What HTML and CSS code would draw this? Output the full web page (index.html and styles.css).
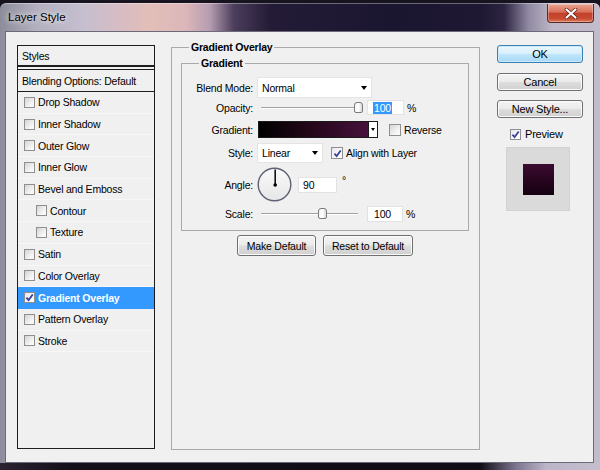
FILE: index.html
```html
<!DOCTYPE html>
<html>
<head>
<meta charset="utf-8">
<title>Layer Style</title>
<link rel="stylesheet" href="styles.css">
</head>
<body>
<div class="window">
  <div class="titlebar">
    <span class="title">Layer Style</span>
    <span class="close">
      <svg width="14" height="11" viewBox="0 0 14 11"><path d="M2.5 1.5 L11.5 9.5 M11.5 1.5 L2.5 9.5" stroke="#5a1a10" stroke-width="3.6" stroke-linecap="round"/><path d="M2.5 1.5 L11.5 9.5 M11.5 1.5 L2.5 9.5" stroke="#fff" stroke-width="2.2" stroke-linecap="round"/></svg>
    </span>
  </div>
  <div class="client">
    <ul class="styles">
      <li class="head">Styles</li>
      <li class="blending">Blending Options: Default</li>
      <li class="item"><span class="cb"></span>Drop Shadow</li>
      <li class="item"><span class="cb"></span>Inner Shadow</li>
      <li class="item"><span class="cb"></span>Outer Glow</li>
      <li class="item"><span class="cb"></span>Inner Glow</li>
      <li class="item"><span class="cb"></span>Bevel and Emboss</li>
      <li class="item sub"><span class="cb"></span>Contour</li>
      <li class="item sub"><span class="cb"></span>Texture</li>
      <li class="item"><span class="cb"></span>Satin</li>
      <li class="item"><span class="cb"></span>Color Overlay</li>
      <li class="item selected"><span class="cb checked"><svg viewBox="0 0 10 10"><path d="M1.6 5.2 L4 7.8 L8.6 1.6" fill="none" stroke="#2f3a9a" stroke-width="2"/></svg></span>Gradient Overlay</li>
      <li class="item"><span class="cb"></span>Pattern Overlay</li>
      <li class="item"><span class="cb"></span>Stroke</li>
    </ul>

    <fieldset class="group outer">
      <legend>Gradient Overlay</legend>
      <fieldset class="group inner">
        <legend>Gradient</legend>
        <div class="form">
          <div class="row r-blend">
            <span class="lbl">Blend Mode:</span>
            <span class="select select-blend">Normal<span class="arrow"></span></span>
          </div>
          <div class="row r-opacity">
            <span class="lbl">Opacity:</span>
            <span class="slider"><span class="track"></span><span class="thumb" style="left:93px"></span></span>
            <span class="field field-opacity"><span class="sel">100</span></span>
            <span class="unit">%</span>
          </div>
          <div class="row r-gradient">
            <span class="lbl">Gradient:</span>
            <span class="gradbar"><span class="gradfill"></span><span class="gradbtn"><span class="arrow small"></span></span></span>
            <span class="cb cb-reverse"></span><span class="cb-text">Reverse</span>
          </div>
          <div class="row r-style">
            <span class="lbl">Style:</span>
            <span class="select select-style">Linear<span class="arrow"></span></span>
            <span class="cb checked cb-align"><svg viewBox="0 0 10 10"><path d="M1.6 5.2 L4 7.8 L8.6 1.6" fill="none" stroke="#3a3f9c" stroke-width="2"/></svg></span><span class="cb-text">Align with Layer</span>
          </div>
          <div class="row r-angle">
            <span class="lbl">Angle:</span>
            <svg class="dial" width="35" height="35" viewBox="0 0 35 35">
              <defs><linearGradient id="dialbg" x1="0" y1="0" x2="0" y2="1"><stop offset="0" stop-color="#fafafa"/><stop offset="1" stop-color="#e6e6e8"/></linearGradient></defs>
              <circle cx="17.5" cy="17.5" r="16.3" fill="url(#dialbg)" stroke="#5c6174" stroke-width="1.4"/>
              <line x1="18.2" y1="18" x2="18.2" y2="2.5" stroke="#111" stroke-width="1.6"/>
              <circle cx="18.2" cy="18" r="1.8" fill="#000"/>
            </svg>
            <span class="field field-angle">90</span>
            <span class="deg">°</span>
          </div>
          <div class="row r-scale">
            <span class="lbl">Scale:</span>
            <span class="slider"><span class="track"></span><span class="thumb" style="left:57px"></span></span>
            <span class="field field-scale">100</span>
            <span class="unit">%</span>
          </div>
        </div>
      </fieldset>
      <div class="defaults">
        <button class="btn btn-make">Make Default</button>
        <button class="btn btn-reset">Reset to Default</button>
      </div>
    </fieldset>

    <div class="actions">
      <button class="btn btn-ok">OK</button>
      <button class="btn btn-cancel">Cancel</button>
      <button class="btn btn-new">New Style...</button>
      <div class="preview-toggle"><span class="cb checked"><svg viewBox="0 0 10 10"><path d="M1.6 5.2 L4 7.8 L8.6 1.6" fill="none" stroke="#3a3f9c" stroke-width="2"/></svg></span><span class="cb-text">Preview</span></div>
      <div class="preview"><span class="swatch"></span></div>
    </div>
  </div>
</div>
</body>
</html>
```

FILE: styles.css
```css
* { box-sizing: border-box; }
html, body { margin: 0; padding: 0; }
body {
  width: 600px;
  height: 470px;
  overflow: hidden;
  background: #17131f;
  font-family: "Liberation Sans", Arial, sans-serif;
  font-size: 10.5px;
  letter-spacing: -0.2px;
  color: #000;
}

.window {
  margin-top: 3px;
  height: 467px;
  display: flex;
  flex-direction: column;
  border-radius: 6px 6px 0 0;
  background:
    linear-gradient(to right, #2a2230 0%, #120f18 12%, #0f0c15 80%, #7d7590 86%, #bcb5c8 91%, #c4bece 100%) left bottom / 100% 7px no-repeat,
    linear-gradient(to right, #8d8c9a 0%, #b2afbf 6%, #c6bfcf 14%, #d7bcc4 20%, #e2bfb8 25%, #dcb6b9 31%, #b49cb0 35%, #4b3d5c 39%, #241c36 45%, #1b1630 65%, #1e1832 80%, #2c2440 84%, #8f88a0 88%, #bdb7c8 92%, #c2bccc 100%);
  box-shadow: inset 0 1px 0 rgba(255, 255, 255, .35);
}

.titlebar {
  height: 28px;
  flex: none;
  display: flex;
  align-items: flex-start;
  padding: 0 6px 0 8px;
}
.title {
  margin-top: 7px;
  font-size: 11.5px;
  line-height: 14px;
  letter-spacing: 0;
  color: #000;
  text-shadow: 0 0 5px rgba(255, 255, 255, .9), 0 0 10px rgba(255, 255, 255, .6);
}
.close {
  margin-left: auto;
  margin-top: 1px;
  width: 47px;
  height: 19px;
  border: 1px solid #5a2a24;
  border-top: none;
  border-radius: 0 0 4px 4px;
  background: linear-gradient(#e9a593 0%, #d96f5a 45%, #c2412c 52%, #c84a30 80%, #dc7a5e 100%);
  box-shadow: inset 0 0 0 1px rgba(255, 255, 255, .3);
  display: flex;
  align-items: center;
  justify-content: center;
}

.client {
  flex: 1;
  margin: 0 6px 7px 5px;
  background: #f0f0f0;
  border: 1px solid #6c6a7a;
  display: flex;
  align-items: flex-start;
  padding: 13px 10px 0 11px;
}

/* left styles list */
.styles {
  list-style: none;
  margin: 0;
  padding: 0;
  width: 138px;
  height: 404px;
  flex: none;
  border: 1px solid #1d1d1d;
}
.styles li {
  display: flex;
  align-items: center;
  white-space: nowrap;
}
.head {
  height: 21px;
  padding-left: 4px;
  border-bottom: 2px solid #1d1d1d;
}
.blending {
  margin-top: 2px;
  height: 23px;
  padding-left: 4px;
  border-top: 1px solid #1d1d1d;
  border-bottom: 1px solid #1d1d1d;
}
.item {
  height: 21.7px;
  padding-left: 6px;
  border-bottom: 1px solid #f7f7f7;
}
.item.sub { padding-left: 18px; }
.item .cb { margin-right: 3px; }
.item.selected {
  background: #3399ff;
  color: #fff;
  font-weight: bold;
  border-bottom-color: #3399ff;
}

/* checkboxes */
.cb {
  width: 12px;
  height: 12px;
  flex: none;
  border: 1px solid #8f8f8f;
  background: linear-gradient(135deg, #d4d4d4, #f8f8f8 75%);
  display: inline-flex;
  align-items: center;
  justify-content: center;
}
.styles .cb { width: 11px; height: 11px; }
.cb.checked { background: linear-gradient(135deg, #e4e4ee, #ffffff 75%); }
.cb svg { width: 9px; height: 9px; display: block; }
.cb-text { margin-left: 3px; white-space: nowrap; }

/* fieldsets */
.group {
  margin: 0;
  min-width: 0;
  border: 1px solid #a9a9a9;
}
.group > legend {
  padding: 0 2px;
  font-weight: bold;
  line-height: 13px;
}
.outer {
  flex: none;
  margin-left: 16px;
  margin-top: -4px;
  width: 309px;
  height: 409px;
  padding: 3px 10px 0 9px;
}
.outer > legend { margin-left: 8px; }
.inner {
  width: 288px;
  padding: 0 0 8px 0;
}
.inner > legend { margin-left: 17px; }

.form { padding-top: 7px; }
.row {
  display: flex;
  align-items: center;
  white-space: nowrap;
}
.lbl {
  width: 71px;
  margin-right: 4px;
  text-align: right;
  flex: none;
}
.r-blend { height: 21px; }
.r-opacity { height: 15px; margin-top: 2px; }
.r-gradient { height: 17px; margin-top: 6px; }
.r-style { height: 20px; margin-top: 5px; }
.r-angle { height: 35px; margin-top: 4px; }
.r-scale { height: 16px; margin-top: 4px; }

.select {
  height: 100%;
  background: #fff;
  border: 1px solid #e4e4e4;
  display: flex;
  align-items: center;
  padding-left: 4px;
  flex: none;
}
.select-blend { width: 115px; }
.select-style { width: 66px; }
.arrow {
  margin-left: auto;
  margin-right: 4px;
  width: 0;
  height: 0;
  border-left: 3.5px solid transparent;
  border-right: 3.5px solid transparent;
  border-top: 4px solid #000;
}
.arrow.small {
  margin: 0;
  border-left-width: 2.5px;
  border-right-width: 2.5px;
  border-top-width: 3px;
}

.slider {
  position: relative;
  width: 97px;
  height: 100%;
  margin-left: 4px;
  flex: none;
  display: flex;
  align-items: center;
}
.track {
  width: 100%;
  height: 2px;
  border-top: 1px solid #a2a2a2;
  border-bottom: 1px solid #fff;
}
.thumb {
  position: absolute;
  top: 50%;
  margin-top: -6px;
  width: 9px;
  height: 11px;
  border: 1px solid #7a7a7a;
  border-radius: 3px 3px 2px 2px;
  background: linear-gradient(to right, #f4f4f4, #ffffff 50%, #d8d8d8);
}

.field {
  height: 100%;
  background: #fff;
  border: 1px solid #e2e2e2;
  display: flex;
  align-items: center;
  flex: none;
}
.field-opacity { margin-left: 9px; width: 37px; padding-left: 5px; }
.field-scale { margin-left: 9px; width: 36px; padding-left: 6px; }
.field-angle { margin-left: 6px; width: 39px; height: 16px; padding-left: 4px; }
.sel { background: #3399ff; color: #fff; padding: 0 1px; }
.unit { margin-left: 3px; }
.deg { margin-left: 5px; align-self: flex-start; margin-top: 7px; }

.gradbar {
  margin-left: 1px;
  width: 120px;
  height: 100%;
  border: 1px solid #1a1a1a;
  display: flex;
  flex: none;
}
.gradfill {
  flex: 1;
  background: linear-gradient(to right, #000000, #220718 45%, #47113c);
}
.gradbtn {
  width: 9px;
  background: #fff;
  border-left: 1px solid #1a1a1a;
  display: flex;
  align-items: center;
  justify-content: center;
}
.cb-reverse { margin-left: 11px; }
.cb-align { margin-left: 8px; }
.dial { flex: none; display: block; }

/* buttons */
.btn {
  font-family: inherit;
  font-size: 10.5px;
  letter-spacing: -0.2px;
  color: #000;
  padding: 0;
  height: 21px;
  border: 1px solid #707070;
  border-radius: 3px;
  background: linear-gradient(#f4f4f4 0%, #ebebeb 48%, #dddddd 52%, #d0d0d0 100%);
  box-shadow: inset 0 0 0 1px #fbfbfb;
}
.defaults {
  display: flex;
  justify-content: center;
  gap: 7px;
  margin-top: 4px;
}
.btn-make { width: 79px; }
.btn-reset { width: 90px; }

.actions {
  flex: none;
  margin-left: 17px;
  width: 86px;
  display: flex;
  flex-direction: column;
}
.actions .btn { width: 86px; height: 18px; font-size: 11px; }
.btn-ok {
  border-color: #3c7fb1;
  background: linear-gradient(#eaf6fd 0%, #d9f0fc 48%, #bee6fd 52%, #a7d9f5 100%);
  box-shadow: inset 0 0 0 1px #c8eafc;
}
.btn-cancel { margin-top: 10px; }
.btn-new { margin-top: 9px; }
.preview-toggle {
  margin-top: 10px;
  padding-left: 13px;
  height: 12px;
  display: flex;
  align-items: center;
  font-size: 11px;
}
.preview-toggle .cb { width: 11px; height: 11px; }
.preview-toggle .cb-text { margin-left: 4px; }
.preview {
  margin: 7px 0 0 9px;
  width: 64px;
  height: 64px;
  background: #dadada;
  border: 1px solid #d2d2d2;
  display: flex;
  align-items: center;
  justify-content: center;
}
.swatch {
  width: 31px;
  height: 31px;
  background: linear-gradient(#3b0b31, #14000f);
}
```
